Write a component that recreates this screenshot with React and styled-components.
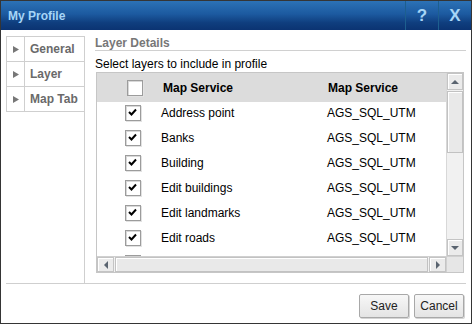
import React from 'react';
import styled, { createGlobalStyle } from 'styled-components';

const Global = createGlobalStyle`
  html, body { margin: 0; padding: 0; background: #fff; }
  body { font-family: "Liberation Sans", Arial, sans-serif; font-size: 12px; color: #000; }
  * { box-sizing: border-box; }
`;

const Window = styled.div`
  width: 472px;
  height: 324px;
  border: 1px solid #353535;
  display: flex;
  flex-direction: column;
  background: #fff;
`;

const TitleBar = styled.div`
  height: 29px;
  flex: none;
  display: flex;
  align-items: stretch;
  background: linear-gradient(#2c72b6 0%, #1c5aa0 45%, #0f3e7e 75%, #0b3372 100%);
`;

const Title = styled.div`
  flex: 1;
  display: flex;
  align-items: center;
  padding-left: 7px;
  font-weight: bold;
  font-size: 12px;
  color: #a6d5f7;
`;

const TitleButton = styled.div`
  width: 33px;
  display: flex;
  align-items: center;
  justify-content: center;
  border-left: 1px solid #1d5f8f;
  font-weight: bold;
  font-size: 17px;
  color: #a6d5f7;
`;

const Body = styled.div`
  flex: 1;
  display: flex;
  padding: 6px 5px 0 5px;
  min-height: 0;
`;

const LeftPanel = styled.div`
  width: 79px;
  flex: none;
  border-right: 1px solid #cfcfcf;
`;

const NavList = styled.div`
  border-top: 1px solid #cfcfcf;
  border-left: 1px solid #cfcfcf;
`;

const NavTab = styled.div`
  height: 25px;
  display: flex;
  border-bottom: 1px solid #cfcfcf;
`;

const NavArrow = styled.div`
  width: 18px;
  flex: none;
  display: flex;
  align-items: center;
  justify-content: center;
  border-right: 1px solid #cfcfcf;
`;

const NavLabel = styled.div`
  flex: 1;
  display: flex;
  align-items: center;
  padding-left: 5px;
  font-weight: bold;
  font-size: 12px;
  color: #6a6a6a;
`;

const RightPanel = styled.div`
  flex: 1;
  display: flex;
  flex-direction: column;
  padding-left: 10px;
`;

const SectionTitle = styled.div`
  line-height: 14px;
  font-weight: bold;
  font-size: 12px;
  color: #777;
  border-bottom: 1px solid #d0d0d0;
`;

const Instruction = styled.div`
  margin-top: 6px;
  line-height: 15px;
  font-size: 12px;
  color: #000;
`;

const Grid = styled.div`
  margin: 0 2px 0 1px;
  height: 201px;
  border: 1px solid #c6c6c6;
  display: grid;
  grid-template-columns: 1fr 17px;
  grid-template-rows: 1fr 16px;
  overflow: hidden;
`;

const GridMain = styled.div`
  overflow: hidden;
  background: #fff;
`;

const HeaderRow = styled.div`
  height: 29px;
  display: flex;
  align-items: center;
  background: #dcdcdc;
  font-weight: bold;
  font-size: 12px;
`;

const Row = styled.div`
  height: 25px;
  padding-bottom: 3px;
  display: flex;
  align-items: center;
  font-size: 12px;
`;

const CheckCell = styled.div`
  width: 64px;
  flex: none;
  padding-left: ${p => p.$pad}px;
  display: flex;
  align-items: center;
`;

const NameCell = styled.div`
  width: 166px;
  flex: none;
  padding-left: ${p => p.$pad || 0}px;
  white-space: nowrap;
`;

const ServiceCell = styled.div`
  flex: 1;
  padding-left: ${p => p.$pad || 0}px;
  white-space: nowrap;
`;

const Box = styled.span`
  width: 16px;
  height: 16px;
  display: inline-flex;
  align-items: flex-start;
  justify-content: flex-start;
  border: 1px solid #9c9c9c;
  background: #fff;
  box-shadow: inset 1px 1px 0 #d8d8d8, 1px 1px 0 #e2e2e2;
  padding: 2px 0 0 2px;
`;

const VScroll = styled.div`
  display: flex;
  flex-direction: column;
  background: #f1f1f1;
  border-left: 1px solid #d8d8d8;
`;

const HScroll = styled.div`
  display: flex;
  background: #f1f1f1;
  border-top: 1px solid #d0d0d0;
`;

const ScrollBtn = styled.div`
  width: ${p => (p.$horiz ? '17px' : '100%')};
  height: ${p => (p.$horiz ? '100%' : '17px')};
  flex: none;
  display: flex;
  align-items: center;
  justify-content: center;
  background: #ebebeb;
  border: 1px solid #c4c4c4;
  box-shadow: inset 1px 1px 0 #fff;
`;

const Track = styled.div`
  flex: 1;
  display: flex;
  flex-direction: ${p => (p.$horiz ? 'row' : 'column')};
  padding: ${p => (p.$horiz ? '0 1px' : '1px 0')};
`;

const Thumb = styled.div`
  flex: ${p => (p.$fill ? 1 : 'none')};
  height: ${p => p.$size || 'auto'};
  background: #e9e9e9;
  border: 1px solid #c2c2c2;
  box-shadow: inset 1px 1px 0 #fff;
`;

const Corner = styled.div`
  background: #e6e6e6;
  border-top: 1px solid #d0d0d0;
  border-left: 1px solid #d0d0d0;
`;

const Footer = styled.div`
  height: 40px;
  flex: none;
  margin: 0 5px;
  border-top: 1px solid #cfcfcf;
  display: flex;
  justify-content: flex-end;
  align-items: flex-start;
  gap: 5px;
  padding: 10px 2px 0 0;
`;

const Button = styled.button`
  width: 50px;
  height: 24px;
  font-family: "Liberation Sans", Arial, sans-serif;
  font-size: 12px;
  color: #222;
  background: linear-gradient(#f7f7f7, #e4e4e4);
  border: 1px solid #a8a8a8;
  border-radius: 2px;
  box-shadow: 1px 1px 0 #d4d4d4;
  padding: 0;
`;

const Check = ({ checked }) => (
  <Box>
    {checked && (
      <svg width="10" height="9" viewBox="0 0 10 9">
        <path d="M1 4 L3.5 6.5 L8 1.5" fill="none" stroke="#000" strokeWidth="2" />
      </svg>
    )}
  </Box>
);

const Tri = ({ dir }) => {
  const pts = {
    up: '0,5 4,1 8,5',
    down: '0,1 4,5 8,1',
    left: '5,0 1,4 5,8',
    right: '1,0 5,4 1,8',
  }[dir];
  const vert = dir === 'up' || dir === 'down';
  return (
    <svg width={vert ? 8 : 6} height={vert ? 6 : 8} viewBox={vert ? '0 0 8 6' : '0 0 6 8'}>
      <polygon points={pts} fill="#5a6470" />
    </svg>
  );
};

const NavTri = () => (
  <svg width="6" height="7" viewBox="0 0 6 7">
    <polygon points="0,0 6,3.5 0,7" fill="#777" />
  </svg>
);

const tabs = ['General', 'Layer', 'Map Tab'];
const layers = ['Address point', 'Banks', 'Building', 'Edit buildings', 'Edit landmarks', 'Edit roads', 'Fire stations'];

export default function App() {
  return (
    <>
      <Global />
      <Window>
        <TitleBar>
          <Title>My Profile</Title>
          <TitleButton>?</TitleButton>
          <TitleButton>X</TitleButton>
        </TitleBar>
        <Body>
          <LeftPanel>
            <NavList>
              {tabs.map(t => (
                <NavTab key={t}>
                  <NavArrow><NavTri /></NavArrow>
                  <NavLabel>{t}</NavLabel>
                </NavTab>
              ))}
            </NavList>
          </LeftPanel>
          <RightPanel>
            <SectionTitle>Layer Details</SectionTitle>
            <Instruction>Select layers to include in profile</Instruction>
            <Grid>
              <GridMain>
                <HeaderRow>
                  <CheckCell $pad={30}><Check /></CheckCell>
                  <NameCell $pad={2}>Map Service</NameCell>
                  <ServiceCell $pad={1}>Map Service</ServiceCell>
                </HeaderRow>
                {layers.map(l => (
                  <Row key={l}>
                    <CheckCell $pad={28}><Check checked /></CheckCell>
                    <NameCell>{l}</NameCell>
                    <ServiceCell>AGS_SQL_UTM</ServiceCell>
                  </Row>
                ))}
              </GridMain>
              <VScroll>
                <ScrollBtn><Tri dir="up" /></ScrollBtn>
                <Track>
                  <Thumb $size="62px" />
                </Track>
                <ScrollBtn><Tri dir="down" /></ScrollBtn>
              </VScroll>
              <HScroll>
                <ScrollBtn $horiz><Tri dir="left" /></ScrollBtn>
                <Track $horiz>
                  <Thumb $fill />
                </Track>
                <ScrollBtn $horiz><Tri dir="right" /></ScrollBtn>
              </HScroll>
              <Corner />
            </Grid>
          </RightPanel>
        </Body>
        <Footer>
          <Button>Save</Button>
          <Button>Cancel</Button>
        </Footer>
      </Window>
    </>
  );
}
